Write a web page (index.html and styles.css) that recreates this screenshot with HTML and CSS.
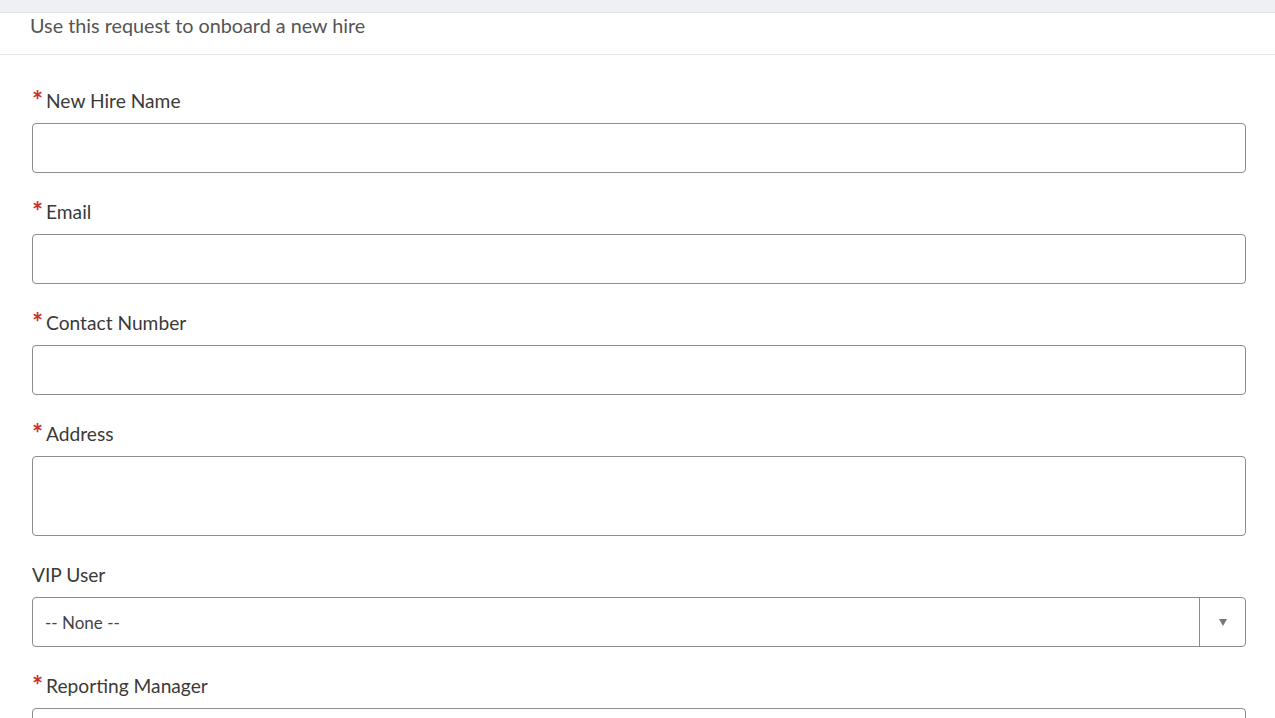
FILE: index.html
```html
<!DOCTYPE html>
<html>
<head>
<meta charset="utf-8">
<link rel="stylesheet" href="styles.css">
</head>
<body>
<div class="topbar"></div>
<div class="desc">Use this request to onboard a new hire</div>
<form class="form">
  <div class="field">
    <label class="label"><span class="req">*</span>New Hire Name</label>
    <div class="input"></div>
  </div>
  <div class="field">
    <label class="label"><span class="req">*</span>Email</label>
    <div class="input"></div>
  </div>
  <div class="field">
    <label class="label"><span class="req">*</span>Contact Number</label>
    <div class="input"></div>
  </div>
  <div class="field">
    <label class="label"><span class="req">*</span>Address</label>
    <div class="input textarea"></div>
  </div>
  <div class="field">
    <label class="label plain">VIP User</label>
    <div class="input select">
      <span class="sel-text">-- None --</span>
      <span class="sel-btn"><span class="arrow"></span></span>
    </div>
  </div>
  <div class="field">
    <label class="label"><span class="req">*</span>Reporting Manager</label>
    <div class="input"></div>
  </div>
</form>
</body>
</html>
```
FILE: styles.css
```css
html, body {
  margin: 0;
  padding: 0;
  background: #fff;
  font-family: Lato, "Open Sans", sans-serif;
  overflow: hidden;
}
.topbar {
  height: 12px;
  background: #eff0f4;
  border-bottom: 1px solid #e2e3e6;
}
.desc {
  height: 42px;
  box-sizing: border-box;
  padding: 0 0 0 30px;
  line-height: 24px;
  font-size: 19.8px;
  color: #555;
  border-bottom: 1px solid #e3e3e3;
}
.form {
  padding: 34px 29px 0 32px;
}
.field {
  margin-bottom: 27px;
}
.label {
  display: flex;
  align-items: flex-start;
  height: 24px;
  line-height: 24px;
  font-size: 19.2px;
  color: #3a3a3a;
  margin-bottom: 10px;
}
.req {
  color: #c8302c;
  font-size: 26px;
  line-height: 22px;
  width: 14px;
  font-weight: 700;
}
.input {
  height: 50px;
  box-sizing: border-box;
  border: 1px solid #8c8c8c;
  border-radius: 4px;
  background: #fff;
}
.textarea {
  height: 80px;
}
.select {
  display: flex;
  align-items: center;
}
.sel-text {
  flex: 1;
  padding-left: 12px;
  font-size: 17px;
  color: #444;
}
.sel-btn {
  width: 45px;
  height: 100%;
  border-left: 1px solid #8c8c8c;
  display: flex;
  align-items: center;
  justify-content: center;
}
.arrow {
  width: 0;
  height: 0;
  border-left: 4px solid transparent;
  border-right: 4px solid transparent;
  border-top: 7px solid #777;
}
```
